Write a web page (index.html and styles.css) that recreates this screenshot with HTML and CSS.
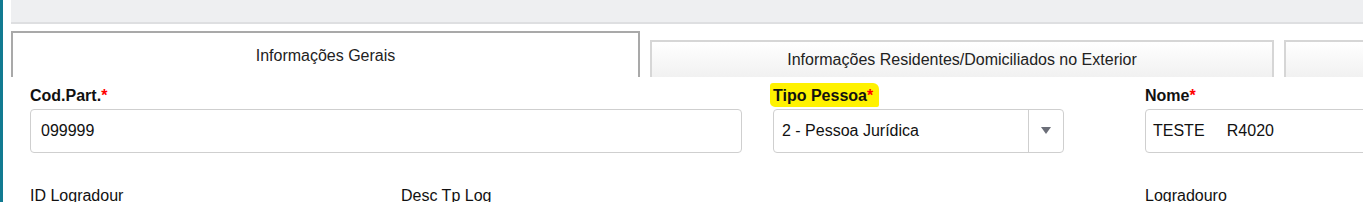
FILE: index.html
```html
<html>
<head>
<meta charset="utf-8">
<link rel="stylesheet" href="styles.css">
</head>
<body>
    <div class="side_bar"></div>
    <div class="main">
        <div class="top_bar"></div>
        <!-- tabs -->
        <div class="tabs">
            <div class="tab active">Informações Gerais</div>
            <div class="tab">Informações Residentes/Domiciliados no Exterior</div>
            <div class="tab"></div>
        </div>
        <div class="form">
            <div class="row1">
                <div class="field cod">
                    <label class="lbl">Cod.Part.<span class="req">*</span></label>
                    <div class="inp pad_cod">099999</div>
                </div>
                <div class="field tipo">
                    <label class="lbl"><span class="mark">Tipo Pessoa<span class="req">*</span></span></label>
                    <div class="inp sel">
                        <span class="sel_txt">2 - Pessoa Jurídica</span>
                        <span class="sel_btn"><span class="arrow"></span></span>
                    </div>
                </div>
                <div class="field nome">
                    <label class="lbl">Nome<span class="req">*</span></label>
                    <div class="inp pad_nome">TESTE&nbsp;&nbsp;&nbsp;&nbsp;&nbsp;R4020</div>
                </div>
            </div>
            <div class="row2">
                <div class="lbl2">ID Logradour</div>
                <div class="lbl2">Desc Tp Log</div>
                <div class="lbl2">Logradouro</div>
            </div>
        </div>
    </div>
</body>
</html>
```

FILE: styles.css
```css
body {
    margin: 0;
    display: flex;
    height: 202px;
    overflow: hidden;
    background: #fff;
    font-family: "Liberation Sans", Arial, sans-serif;
    font-size: 16px;
    color: #111;
}

.side_bar {
    width: 3px;
    background-color: #117a91;
    flex: none;
}

.main {
    margin-left: 8px;
    flex: 1;
    overflow: hidden;
}

.top_bar {
    height: 22px;
    background-color: #eeeff1;
    border-bottom: 2px solid #dedfe1;
}

.tabs {
    display: flex;
    align-items: flex-end;
    padding-top: 7px;
    height: 46px;
    width: 2000px;
}

.tab {
    box-sizing: border-box;
    width: 624px;
    height: 37px;
    margin-right: 10px;
    border: 2px solid #d6d6d6;
    border-bottom: none;
    background: linear-gradient(#ffffff, #f1f1f1);
    text-align: center;
    line-height: 36px;
    color: #222;
    flex: none;
}

.tab.active {
    width: 629px;
    height: 46px;
    border-color: #a9a9a9;
    background: #fff;
    line-height: 45px;
}

.form {
    padding: 10px 0 0 19px;
}

.row1 {
    display: flex;
    width: 1600px;
}

.field {
    flex: none;
}

.cod {
    width: 712px;
    margin-right: 31px;
}

.tipo {
    width: 291px;
    margin-right: 81px;
}

.nome {
    width: 400px;
}

.lbl {
    display: block;
    font-weight: bold;
    line-height: 18px;
    height: 18px;
    margin-bottom: 4px;
    white-space: nowrap;
}

.req {
    color: #ff0000;
}

.mark {
    background-color: #fff200;
    margin-left: -3px;
    padding: 4px 6px 3px 3px;
    border-radius: 3px 6px 2px 5px;
}

.inp {
    box-sizing: border-box;
    height: 44px;
    border: 1px solid #cfcfcf;
    border-radius: 4px;
    line-height: 42px;
    white-space: nowrap;
}

.pad_cod {
    padding-left: 10px;
}

.pad_nome {
    padding-left: 7px;
}

.sel {
    display: flex;
    padding-left: 8px;
}

.sel_txt {
    flex: 1;
}

.sel_btn {
    width: 34px;
    border-left: 1px solid #cfcfcf;
    margin: 0;
    display: flex;
    align-items: center;
    justify-content: center;
}

.arrow {
    width: 0;
    height: 0;
    border-left: 5px solid transparent;
    border-right: 5px solid transparent;
    border-top: 7px solid #6b6e78;
    margin-top: -1px;
}

.row2 {
    display: grid;
    grid-template-columns: 371px 744px 1fr;
    margin-top: 34px;
}

.lbl2 {
    line-height: 18px;
}
```
